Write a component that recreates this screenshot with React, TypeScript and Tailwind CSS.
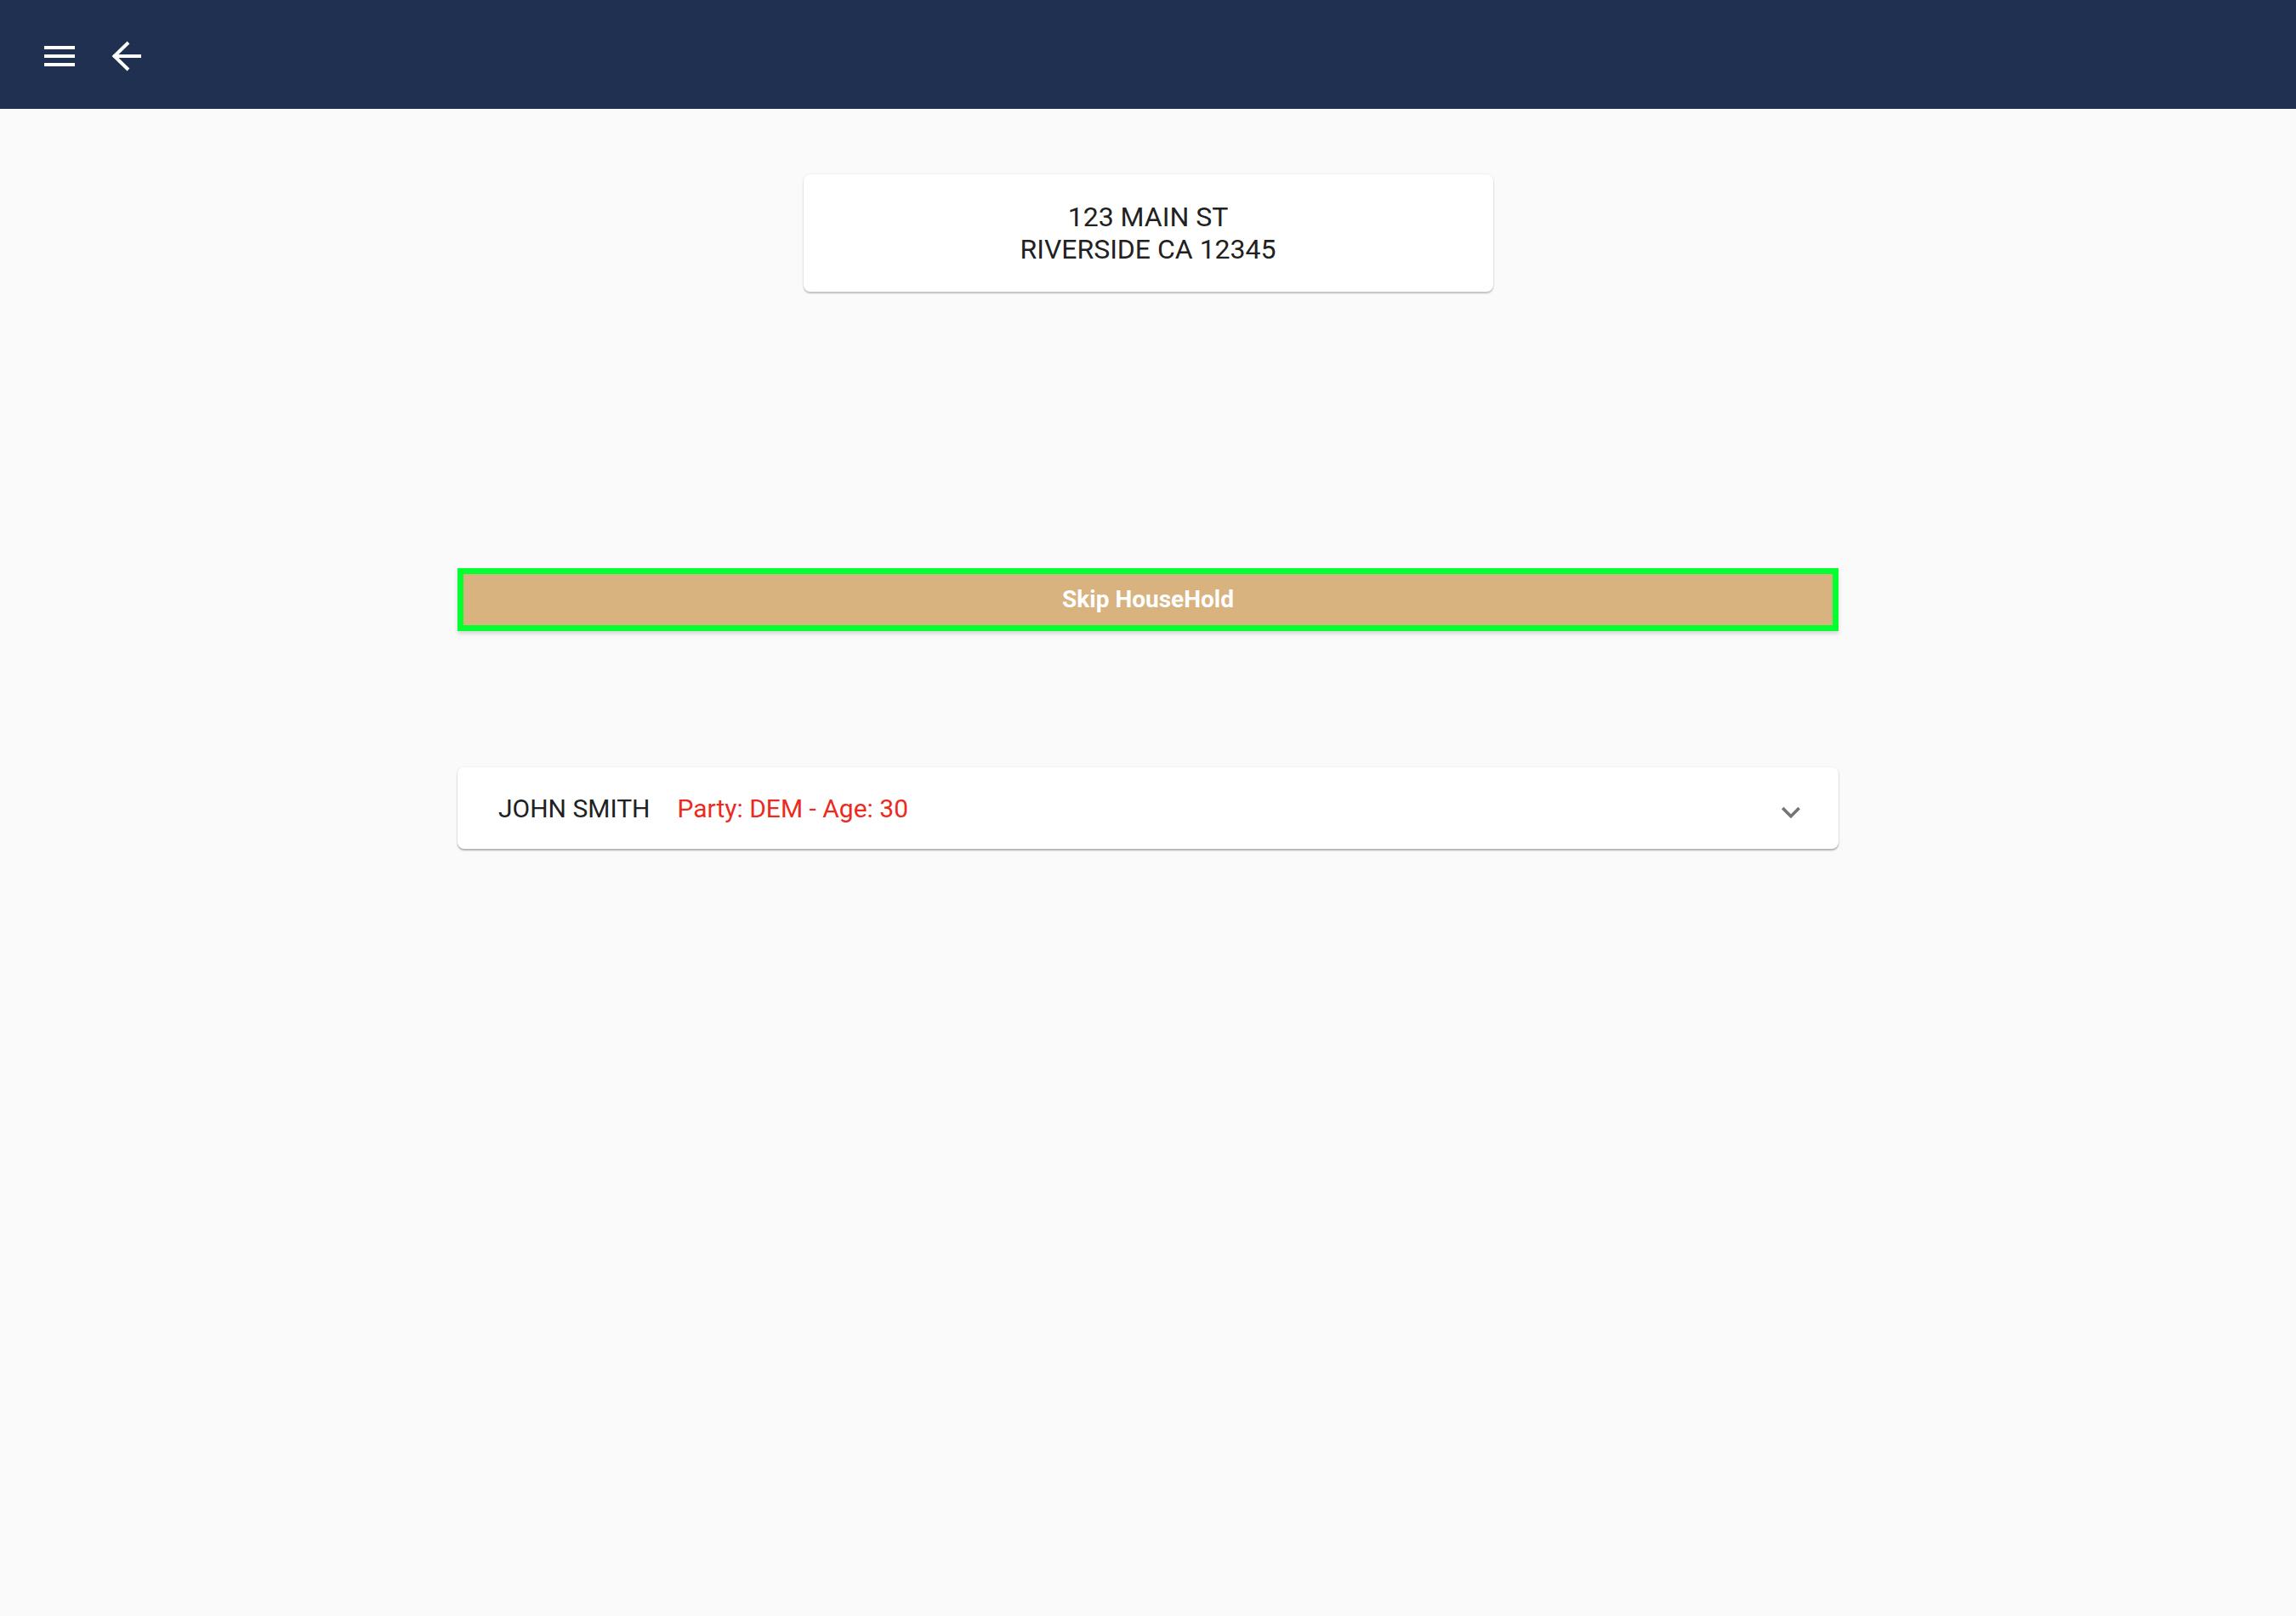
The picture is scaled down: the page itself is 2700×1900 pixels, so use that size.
export default function App() {
  return (
    <div
      className="min-h-screen bg-[#fafafa]"
      style={{ fontFamily: "Roboto, 'Liberation Sans', sans-serif" }}
    >
      <header className="h-[128px] bg-[#1f3051] flex items-center gap-[28px] px-[46px] pt-1">
        <button className="w-12 h-12 text-white">
          <svg viewBox="0 0 48 48" width="48" height="48" fill="currentColor">
            <rect x="6" y="12" width="36" height="4" />
            <rect x="6" y="22" width="36" height="4" />
            <rect x="6" y="32" width="36" height="4" />
          </svg>
        </button>
        <button className="w-12 h-12 text-white">
          <svg
            viewBox="0 0 48 48"
            width="48"
            height="48"
            fill="none"
            stroke="currentColor"
            strokeWidth="4"
          >
            <path d="M11 24H44" />
            <path d="M29 8L12.5 24L29 40" />
          </svg>
        </button>
      </header>

      <main className="flex flex-col items-center">
        <div className="mt-[77px] w-[811px] bg-white rounded-lg shadow-[0_2px_2px_rgba(0,0,0,0.22),0_0_3px_rgba(0,0,0,0.08)] py-[31px] text-center text-[32px] leading-[38px] text-[#212121]">
          <div>123 MAIN ST</div>
          <div>RIVERSIDE CA 12345</div>
        </div>

        <button className="mt-[325px] w-[1624px] h-[74px] border-[7px] border-[#05ff30] bg-[#d8b27f] text-white text-[28px] font-bold shadow-[0_3px_5px_rgba(0,0,0,0.15)]">
          Skip HouseHold
        </button>

        <div className="mt-[160px] w-[1624px] h-[96px] bg-white rounded-lg shadow-[0_2px_2px_rgba(0,0,0,0.28),0_0_3px_rgba(0,0,0,0.08)] flex items-center pl-12 pr-[34px]">
          <span className="text-[30px] text-[#212121]">JOHN SMITH</span>
          <span className="ml-8 text-[30px] text-[#ec2a1e]">
            Party: DEM - Age: 30
          </span>
          <svg
            className="ml-auto mt-[10px] text-[#757575]"
            viewBox="0 0 24 24"
            width="44"
            height="44"
            fill="currentColor"
          >
            <path d="M16.59 8.59L12 13.17 7.41 8.59 6 10l6 6 6-6z" />
          </svg>
        </div>
      </main>
    </div>
  );
}
